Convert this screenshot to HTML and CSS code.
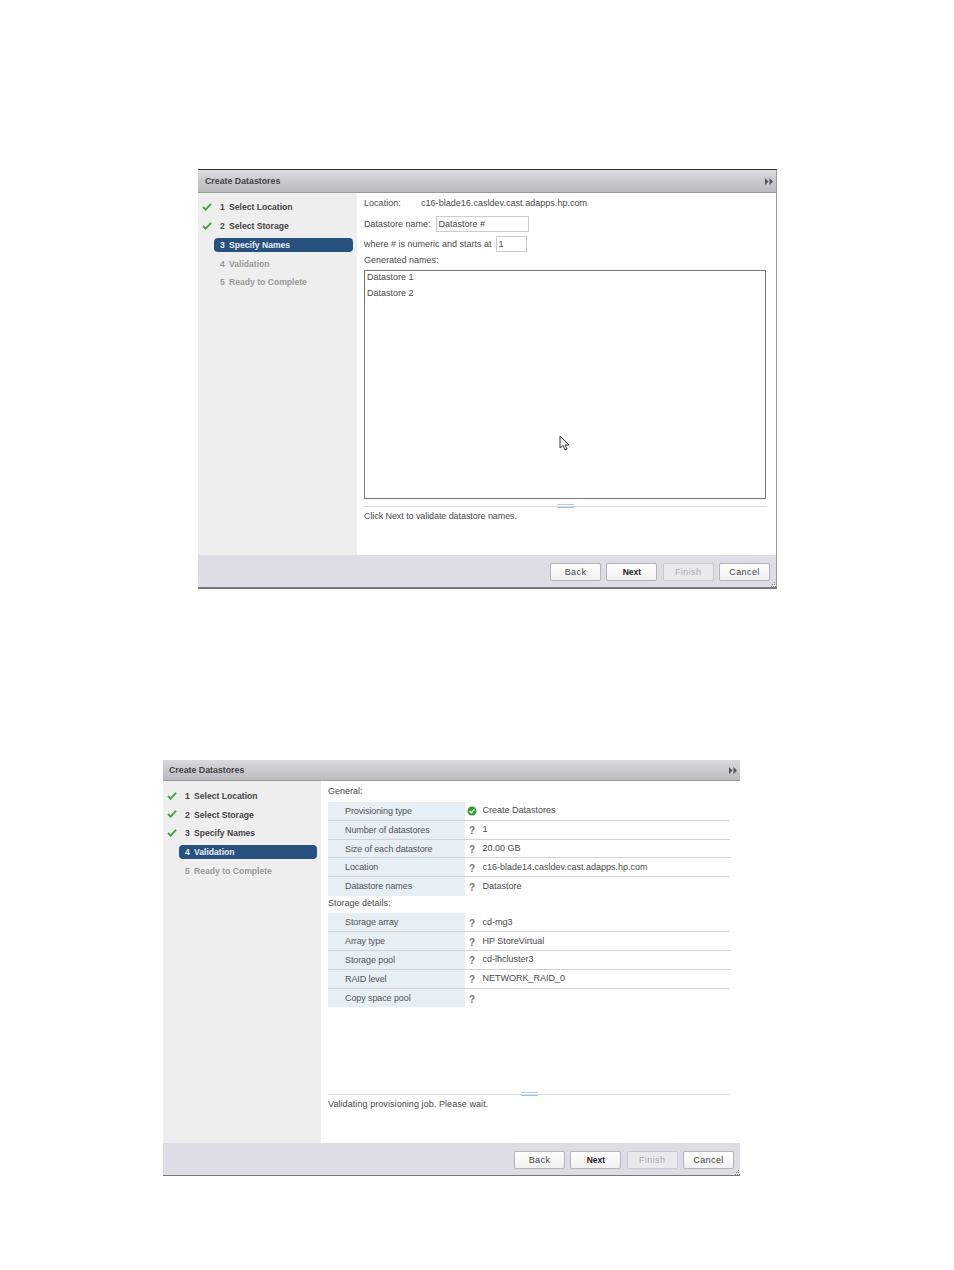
FILE: index.html
```html
<!DOCTYPE html>
<html lang="en">
<head>
  <meta charset="UTF-8">
  <title>Create Datastores</title>
  <link rel="stylesheet" href="styles.css">
</head>
<body>

  <!-- Step 3 -->
  <div class="dialog dialog-names">
    <div class="dialog-head">
      <span class="dialog-title">Create Datastores</span>
      <svg class="head-arrows" width="8" height="7" viewBox="0 0 8 7"><path d="M0 0l3.5 3.5L0 7zM4.5 0L8 3.5 4.5 7z"/></svg>
    </div>
    <div class="dialog-main">
      <ul class="steps">
        <li class="step done"><svg class="check" width="10" height="8" viewBox="0 0 11 9"><path d="M1 4.5l3 3L10 1"/></svg><span class="num">1</span>Select Location</li>
        <li class="step done"><svg class="check" width="10" height="8" viewBox="0 0 11 9"><path d="M1 4.5l3 3L10 1"/></svg><span class="num">2</span>Select Storage</li>
        <li class="step current"><span class="num">3</span>Specify Names</li>
        <li class="step todo"><span class="num">4</span>Validation</li>
        <li class="step todo"><span class="num">5</span>Ready to Complete</li>
      </ul>
      <div class="pane">
        <div class="line-location"><span class="loc-label">Location:</span>c16-blade16.casldev.cast.adapps.hp.com</div>
        <div class="line-field">Datastore name:<span class="field field-name">Datastore #</span></div>
        <div class="line-field line-start">where # is numeric and starts at<span class="field field-start">1</span></div>
        <div class="names-label">Generated names:</div>
        <div class="names-box">
          <div class="name-item">Datastore 1</div>
          <div class="name-item">Datastore 2</div>
          <svg class="cursor" width="11" height="17" viewBox="0 0 11 17"><path d="M1 1v12l3-2.5 2 4.5 2-1-2-4h4z"/></svg>
        </div>
        <div class="splitter"><span class="grip"></span></div>
        <div class="note">Click Next to validate datastore names.</div>
      </div>
    </div>
    <div class="dialog-foot">
      <button class="btn">Back</button>
      <button class="btn btn-next">Next</button>
      <button class="btn btn-off">Finish</button>
      <button class="btn">Cancel</button>
      <svg class="resize" width="5" height="5" viewBox="0 0 5 5"><path d="M3 0h1v1H3zM1 2h1v1H1zM3 2h1v1H3zM0 4h1v1H0zM2 4h1v1H2zM4 4h1v1H4z"/></svg>
    </div>
  </div>

  <!-- Step 4 -->
  <div class="dialog dialog-check">
    <div class="dialog-head">
      <span class="dialog-title">Create Datastores</span>
      <svg class="head-arrows" width="8" height="7" viewBox="0 0 8 7"><path d="M0 0l3.5 3.5L0 7zM4.5 0L8 3.5 4.5 7z"/></svg>
    </div>
    <div class="dialog-main">
      <ul class="steps">
        <li class="step done"><svg class="check" width="10" height="8" viewBox="0 0 11 9"><path d="M1 4.5l3 3L10 1"/></svg><span class="num">1</span>Select Location</li>
        <li class="step done"><svg class="check" width="10" height="8" viewBox="0 0 11 9"><path d="M1 4.5l3 3L10 1"/></svg><span class="num">2</span>Select Storage</li>
        <li class="step done"><svg class="check" width="10" height="8" viewBox="0 0 11 9"><path d="M1 4.5l3 3L10 1"/></svg><span class="num">3</span>Specify Names</li>
        <li class="step current"><span class="num">4</span>Validation</li>
        <li class="step todo"><span class="num">5</span>Ready to Complete</li>
      </ul>
      <div class="pane">
        <div class="group-label">General:</div>
        <div class="info">
          <div class="info-row">
            <div class="info-key">Provisioning type</div>
            <div class="info-val"><svg class="ok" width="10" height="10" viewBox="0 0 10 10"><circle cx="5" cy="5" r="4.5"/><path d="M2.6 5l1.8 1.8 3-3.3"/></svg>Create Datastores</div>
          </div>
          <div class="info-row">
            <div class="info-key">Number of datastores</div>
            <div class="info-val"><span class="ask">?</span>1</div>
          </div>
          <div class="info-row">
            <div class="info-key">Size of each datastore</div>
            <div class="info-val"><span class="ask">?</span>20.00 GB</div>
          </div>
          <div class="info-row">
            <div class="info-key">Location</div>
            <div class="info-val"><span class="ask">?</span>c16-blade14.casldev.cast.adapps.hp.com</div>
          </div>
          <div class="info-row">
            <div class="info-key">Datastore names</div>
            <div class="info-val"><span class="ask">?</span>Datastore</div>
          </div>
        </div>
        <div class="group-label group-storage">Storage details:</div>
        <div class="info">
          <div class="info-row">
            <div class="info-key">Storage array</div>
            <div class="info-val"><span class="ask">?</span>cd-mg3</div>
          </div>
          <div class="info-row">
            <div class="info-key">Array type</div>
            <div class="info-val"><span class="ask">?</span>HP StoreVirtual</div>
          </div>
          <div class="info-row">
            <div class="info-key">Storage pool</div>
            <div class="info-val"><span class="ask">?</span>cd-lhcluster3</div>
          </div>
          <div class="info-row">
            <div class="info-key">RAID level</div>
            <div class="info-val"><span class="ask">?</span>NETWORK_RAID_0</div>
          </div>
          <div class="info-row">
            <div class="info-key">Copy space pool</div>
            <div class="info-val"><span class="ask">?</span></div>
          </div>
        </div>
        <div class="splitter"><span class="grip"></span></div>
        <div class="note note-wait">Validating provisioning job. Please wait.</div>
      </div>
    </div>
    <div class="dialog-foot">
      <button class="btn">Back</button>
      <button class="btn btn-next">Next</button>
      <button class="btn btn-off">Finish</button>
      <button class="btn">Cancel</button>
      <svg class="resize" width="5" height="5" viewBox="0 0 5 5"><path d="M3 0h1v1H3zM1 2h1v1H1zM3 2h1v1H3zM0 4h1v1H0zM2 4h1v1H2zM4 4h1v1H4z"/></svg>
    </div>
  </div>

</body>
</html>
```

FILE: styles.css
```css
body {
  margin: 0;
  padding: 169px 0 0;
  background: #fff;
  font-family: "Liberation Sans", Arial, sans-serif;
  font-size: 9px;
  color: #4a4a4a;
}

.dialog {
  display: flex;
  flex-direction: column;
  box-sizing: border-box;
  background: #fff;
}

.dialog-names {
  width: 579px;
  height: 420px;
  margin-left: 198px;
  border-top: 1px solid #333;
  border-right: 1px solid #999;
  border-bottom: 2px solid #777;
}

.dialog-check {
  width: 577px;
  height: 416px;
  margin: 171px 0 0 163px;
  border-bottom: 1px solid #777;
}

.dialog-head {
  display: flex;
  align-items: center;
  justify-content: space-between;
  height: 23px;
  padding: 0 3px 0 7px;
  box-sizing: border-box;
  background: linear-gradient(#d9dade, #b9babd);
  border-bottom: 1px solid #9a9a9a;
  flex-shrink: 0;
}

.dialog-check .dialog-head {
  height: 21px;
  padding-left: 6px;
}

.dialog-title {
  font-weight: bold;
  font-size: 8.8px;
  color: #444;
}

.head-arrows {
  fill: #555;
}

.dialog-main {
  display: flex;
  flex: 1;
  min-height: 0;
}

.steps {
  width: 159px;
  margin: 0;
  padding: 7px 4px 0 16px;
  box-sizing: border-box;
  list-style: none;
  background: #eee;
  flex-shrink: 0;
}

.dialog-check .steps {
  width: 158px;
  padding-top: 7.5px;
}

.step {
  position: relative;
  display: flex;
  align-items: center;
  height: 14.5px;
  margin-bottom: 4.3px;
  padding-left: 6px;
  font-weight: bold;
  font-size: 8.6px;
  color: #444;
  border-radius: 4px;
}

.num {
  width: 9px;
}

.step.current {
  background: #27527f;
  color: #e8eef5;
}

.step.todo {
  color: #999;
}

.check {
  position: absolute;
  left: -12px;
  top: 3px;
  fill: none;
  stroke: #3da33d;
  stroke-width: 2;
}

.pane {
  flex: 1;
  padding: 0 10px 0 7px;
  min-width: 0;
}

.line-location {
  margin-top: 5px;
  height: 11px;
  letter-spacing: 0.03px;
}

.loc-label {
  display: inline-block;
  width: 57px;
}

.line-field {
  display: flex;
  align-items: center;
  height: 16px;
  margin-top: 7px;
}

.line-start {
  margin-top: 4px;
}

.field {
  height: 16px;
  line-height: 15px;
  padding-left: 2px;
  box-sizing: border-box;
  border: 1px solid #ccc;
  background: #fff;
}

.field-name {
  width: 93px;
  margin-left: 5px;
}

.field-start {
  width: 31px;
  margin-left: 4px;
}

.names-label {
  margin-top: 1px;
  height: 13px;
  line-height: 14px;
}

.names-box {
  position: relative;
  height: 229px;
  margin-top: 4px;
  padding: 0 2px;
  box-sizing: border-box;
  border: 1px solid #777;
}

.name-item {
  margin-bottom: 4px;
  line-height: 12px;
}

.cursor {
  position: absolute;
  left: 194px;
  top: 164px;
  fill: #fff;
  stroke: #333;
  stroke-width: 1;
}

.splitter {
  position: relative;
  height: 1px;
  margin-top: 7px;
  background: #d3dde7;
}

.grip {
  position: absolute;
  left: 193px;
  top: -2px;
  width: 17px;
  height: 2px;
  border-top: 1px solid #b8c8dc;
  border-bottom: 1px solid #a9bdd6;
}

.note {
  margin-top: 4px;
  line-height: 11px;
  letter-spacing: -0.08px;
}

.note-wait {
  letter-spacing: 0.07px;
}

.group-label {
  height: 11px;
  margin-top: 5px;
  line-height: 11px;
}

.group-storage {
  margin-top: 2.5px;
  height: 10px;
}

.info {
  margin-top: 5px;
}

.info-row {
  display: flex;
  height: 18.8px;
  box-sizing: border-box;
  border-bottom: 1px solid #d4d4d4;
  line-height: 19px;
}

.info-row:last-child {
  border-bottom: 0;
}

.info-key {
  width: 137px;
  padding-left: 17px;
  box-sizing: border-box;
  background: #e6eef6;
  color: #555;
  letter-spacing: -0.1px;
  flex-shrink: 0;
}

.info-val {
  display: flex;
  align-items: center;
  padding-left: 2px;
}

.ok {
  margin-right: 5.5px;
  fill: #2f9e35;
}

.ok path {
  fill: none;
  stroke: #fff;
  stroke-width: 1.3;
}

.ask {
  width: 10px;
  margin-right: 5.5px;
  padding-top: 2px;
  text-align: center;
  font-weight: bold;
  font-size: 10px;
  color: #777;
}

.dialog-check .splitter {
  margin-top: 87px;
}

.dialog-foot {
  position: relative;
  display: flex;
  justify-content: flex-end;
  gap: 5.33px;
  height: 32px;
  padding: 8px 6px 0 0;
  box-sizing: border-box;
  background: #dcdde5;
  flex-shrink: 0;
}

.resize {
  position: absolute;
  right: 0;
  bottom: 0;
  fill: #888;
}

.btn {
  width: 51px;
  height: 18px;
  padding: 0;
  border: 1px solid #b4b4b4;
  border-radius: 2px;
  background: linear-gradient(#fff, #f0f0f0);
  font-family: inherit;
  font-size: 9px;
  letter-spacing: 0.4px;
  color: #444;
}

.btn-next {
  font-weight: bold;
  font-size: 8.5px;
  letter-spacing: 0;
  color: #222;
}

.btn-off {
  border-color: #c8c8d0;
  background: #e9eaef;
  color: #aaa;
}
```
